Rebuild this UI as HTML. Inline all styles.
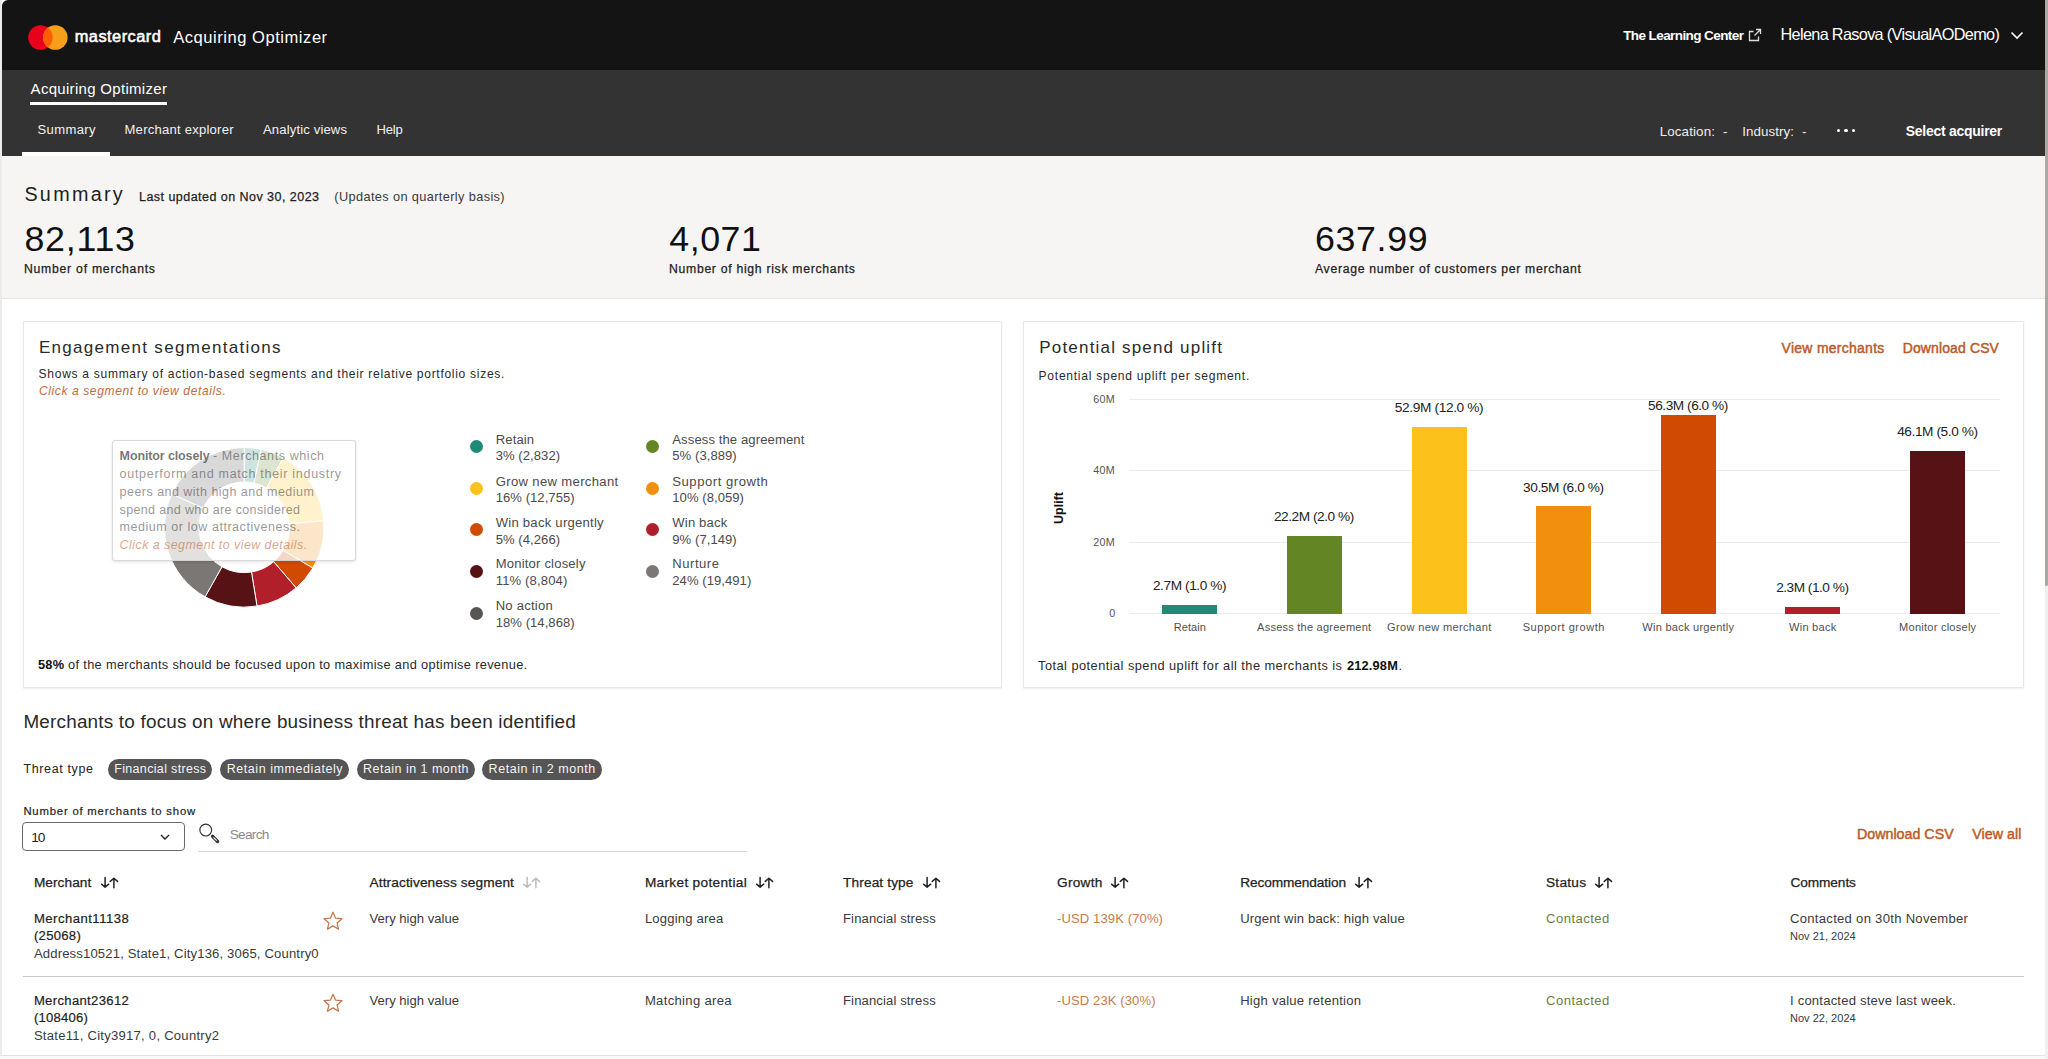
<!DOCTYPE html>
<html><head><meta charset="utf-8"><style>
html,body{margin:0;padding:0;width:2048px;height:1059px;overflow:hidden;background:#fff}
body{position:relative;font-family:"Liberation Sans",sans-serif}
.t{position:absolute;white-space:nowrap;font-family:"Liberation Sans",sans-serif}
</style></head><body>
<div style="position:absolute;left:0;top:0;width:2048px;height:1059px;background:#fff"></div>
<div style="position:absolute;left:2px;top:0;width:2043px;height:70px;background:#141414;border-top-left-radius:6px"></div>
<div style="position:absolute;left:2px;top:70px;width:2043px;height:86px;background:#333333"></div>
<svg style="position:absolute;left:0;top:0" width="200" height="70"><circle cx="40.5" cy="37.5" r="12.3" fill="#eb001b"/><circle cx="55.3" cy="37.5" r="12.3" fill="#f79e1b"/><path d="M47.9 27.7 A12.3 12.3 0 0 1 47.9 47.3 A12.3 12.3 0 0 1 47.9 27.7Z" fill="#ff5f00"/></svg>
<div class="t" style="left:74.70px;top:28.00px;font-size:16.42px;line-height:16.42px;letter-spacing:0.464px;color:#ffffff;-webkit-text-stroke:0.55px #fff;">mastercard</div>
<div class="t" style="left:173.20px;top:30.00px;font-size:16.57px;line-height:16.57px;letter-spacing:0.524px;color:#ffffff;">Acquiring Optimizer</div>
<div class="t" style="left:1623.20px;top:29.00px;font-size:13.52px;line-height:13.52px;letter-spacing:-0.592px;color:#ffffff;font-weight:bold;">The Learning Center</div>
<svg style="position:absolute;left:1747px;top:27px" width="16" height="16" viewBox="0 0 16 16"><path d="M9 2.5h4.5V7M13.5 2.5L7.5 8.5M11.5 9.5v4h-9v-9h4" fill="none" stroke="#ddd" stroke-width="1.3"/></svg>
<div class="t" style="left:1780.50px;top:26.00px;font-size:16.28px;line-height:16.28px;letter-spacing:-0.673px;color:#ffffff;">Helena Rasova (VisualAODemo)</div>
<svg style="position:absolute;left:2009px;top:29px" width="16" height="12" viewBox="0 0 16 12"><path d="M2.5 3.5L8 9L13.5 3.5" fill="none" stroke="#fff" stroke-width="1.6"/></svg>
<div class="t" style="left:30.60px;top:82.00px;font-size:14.97px;line-height:14.97px;letter-spacing:0.315px;color:#ffffff;">Acquiring Optimizer</div>
<div style="position:absolute;left:29.6px;top:102px;width:137.4px;height:3px;background:#fff"></div>
<div class="t" style="left:37.50px;top:123.00px;font-size:13.08px;line-height:13.08px;letter-spacing:0.352px;color:#f2f2f2;">Summary</div>
<div class="t" style="left:124.50px;top:123.00px;font-size:13.08px;line-height:13.08px;letter-spacing:0.229px;color:#f2f2f2;">Merchant explorer</div>
<div class="t" style="left:263.00px;top:123.00px;font-size:13.08px;line-height:13.08px;letter-spacing:0.142px;color:#f2f2f2;">Analytic views</div>
<div class="t" style="left:376.50px;top:123.00px;font-size:13.08px;line-height:13.08px;letter-spacing:-0.194px;color:#f2f2f2;">Help</div>
<div style="position:absolute;left:22.3px;top:152px;width:88px;height:4px;background:#fff"></div>
<div class="t" style="left:1659.70px;top:125.00px;font-size:13.37px;line-height:13.37px;letter-spacing:0.126px;color:#eeeeee;">Location:</div>
<div class="t" style="left:1723.00px;top:125.00px;font-size:13.37px;line-height:13.37px;letter-spacing:0.000px;color:#eeeeee;">-</div>
<div class="t" style="left:1742.30px;top:125.00px;font-size:13.37px;line-height:13.37px;letter-spacing:0.052px;color:#eeeeee;">Industry:</div>
<div class="t" style="left:1802.00px;top:125.00px;font-size:13.37px;line-height:13.37px;letter-spacing:0.000px;color:#eeeeee;">-</div>
<div style="position:absolute;left:1837.0px;top:129px;width:3.2px;height:3.2px;border-radius:50%;background:#fff"></div>
<div style="position:absolute;left:1844.4px;top:129px;width:3.2px;height:3.2px;border-radius:50%;background:#fff"></div>
<div style="position:absolute;left:1851.8000000000002px;top:129px;width:3.2px;height:3.2px;border-radius:50%;background:#fff"></div>
<div class="t" style="left:1905.80px;top:125.00px;font-size:13.95px;line-height:13.95px;letter-spacing:-0.246px;color:#ffffff;font-weight:bold;">Select acquirer</div>
<div style="position:absolute;left:1px;top:156px;width:2044px;height:142px;background:#f6f5f3;border-bottom:1px solid #e6e6e6"></div>
<div class="t" style="left:24.40px;top:185.00px;font-size:19.77px;line-height:19.77px;letter-spacing:2.299px;color:#1e1e1e;">Summary</div>
<div class="t" style="left:139.00px;top:191.00px;font-size:12.50px;line-height:12.50px;letter-spacing:0.463px;color:#1e1e1e;-webkit-text-stroke:0.25px #1e1e1e;">Last updated on Nov 30, 2023</div>
<div class="t" style="left:334.30px;top:191.00px;font-size:12.79px;line-height:12.79px;letter-spacing:0.361px;color:#3a3a3a;">(Updates on quarterly basis)</div>
<div class="t" style="left:24.40px;top:222.00px;font-size:35.76px;line-height:35.76px;letter-spacing:0.773px;color:#111;">82,113</div>
<div class="t" style="left:669.30px;top:222.00px;font-size:35.76px;line-height:35.76px;letter-spacing:0.533px;color:#111;">4,071</div>
<div class="t" style="left:1315.00px;top:222.00px;font-size:35.76px;line-height:35.76px;letter-spacing:0.637px;color:#111;">637.99</div>
<div class="t" style="left:24.00px;top:263.00px;font-size:12.21px;line-height:12.21px;letter-spacing:0.756px;color:#222;-webkit-text-stroke:0.25px #222;">Number of merchants</div>
<div class="t" style="left:669.00px;top:263.00px;font-size:12.21px;line-height:12.21px;letter-spacing:0.706px;color:#222;-webkit-text-stroke:0.25px #222;">Number of high risk merchants</div>
<div class="t" style="left:1315.00px;top:263.00px;font-size:12.21px;line-height:12.21px;letter-spacing:0.702px;color:#222;-webkit-text-stroke:0.25px #222;">Average number of customers per merchant</div>
<div style="position:absolute;left:0;top:0;width:2px;height:1059px;background:#ebebeb"></div>
<div style="position:absolute;left:23px;top:321px;width:977px;height:365px;background:#fff;border:1px solid #e8e8e8;border-radius:1px;box-shadow:0 1px 2px rgba(0,0,0,0.07)"></div>
<div style="position:absolute;left:1023px;top:321px;width:999px;height:365px;background:#fff;border:1px solid #e8e8e8;border-radius:1px;box-shadow:0 1px 2px rgba(0,0,0,0.07)"></div>
<div class="t" style="left:38.90px;top:339.00px;font-size:17.01px;line-height:17.01px;letter-spacing:1.304px;color:#2a2a2a;">Engagement segmentations</div>
<div class="t" style="left:38.60px;top:368.00px;font-size:12.06px;line-height:12.06px;letter-spacing:0.702px;color:#2a2a2a;">Shows a summary of action-based segments and their relative portfolio sizes.</div>
<div class="t" style="left:38.90px;top:385.00px;font-size:12.06px;line-height:12.06px;letter-spacing:0.607px;color:#c46a3c;font-style:italic;">Click a segment to view details.</div>
<svg style="position:absolute;left:0;top:0" width="1000" height="700"><path d="M244.20 447.50 A79.8 79.8 0 0 1 261.36 449.37 L253.94 483.06 A45.3 45.3 0 0 0 244.20 482.00Z" fill="#1f8a78" stroke="#fff" stroke-width="1"/><path d="M261.36 449.37 A79.8 79.8 0 0 1 283.45 457.82 L266.48 487.86 A45.3 45.3 0 0 0 253.94 483.06Z" fill="#648524" stroke="#fff" stroke-width="1"/><path d="M283.45 457.82 A79.8 79.8 0 0 1 323.74 520.88 L289.35 523.66 A45.3 45.3 0 0 0 266.48 487.86Z" fill="#fcc21b" stroke="#fff" stroke-width="1"/><path d="M323.74 520.88 A79.8 79.8 0 0 1 312.80 568.06 L283.14 550.44 A45.3 45.3 0 0 0 289.35 523.66Z" fill="#f28f0f" stroke="#fff" stroke-width="1"/><path d="M312.80 568.06 A79.8 79.8 0 0 1 296.11 587.91 L273.67 561.71 A45.3 45.3 0 0 0 283.14 550.44Z" fill="#d04a02" stroke="#fff" stroke-width="1"/><path d="M296.11 587.91 A79.8 79.8 0 0 1 257.01 606.07 L251.47 572.01 A45.3 45.3 0 0 0 273.67 561.71Z" fill="#b01f2a" stroke="#fff" stroke-width="1"/><path d="M257.01 606.07 A79.8 79.8 0 0 1 205.07 596.85 L221.99 566.78 A45.3 45.3 0 0 0 251.47 572.01Z" fill="#561215" stroke="#fff" stroke-width="1"/><path d="M205.07 596.85 A79.8 79.8 0 0 1 171.77 493.81 L203.08 508.29 A45.3 45.3 0 0 0 221.99 566.78Z" fill="#7a7774" stroke="#fff" stroke-width="1"/><path d="M171.77 493.81 A79.8 79.8 0 0 1 244.20 447.50 L244.20 482.00 A45.3 45.3 0 0 0 203.08 508.29Z" fill="#575553" stroke="#fff" stroke-width="1"/></svg>
<div style="position:absolute;left:112px;top:439.5px;width:242px;height:119px;background:rgba(255,255,255,0.78);border:1px solid rgba(205,205,205,0.75);border-radius:3px;box-shadow:0 1px 3px rgba(0,0,0,0.12)"></div>
<div class="t" style="left:119.60px;top:450.00px;font-size:12.50px;line-height:12.50px;letter-spacing:-0.121px;color:rgba(45,45,45,0.66);font-weight:bold;">Monitor closely</div>
<div class="t" style="left:213.00px;top:450.00px;font-size:12.50px;line-height:12.50px;letter-spacing:0.598px;color:rgba(45,45,45,0.5);">- Merchants which</div>
<div class="t" style="left:119.60px;top:468.00px;font-size:12.50px;line-height:12.50px;letter-spacing:0.711px;color:rgba(45,45,45,0.5);">outperform and match their industry</div>
<div class="t" style="left:119.60px;top:486.00px;font-size:12.50px;line-height:12.50px;letter-spacing:0.469px;color:rgba(45,45,45,0.5);">peers and with high and medium</div>
<div class="t" style="left:119.60px;top:504.00px;font-size:12.50px;line-height:12.50px;letter-spacing:0.350px;color:rgba(45,45,45,0.5);">spend and who are considered</div>
<div class="t" style="left:119.60px;top:521.00px;font-size:12.50px;line-height:12.50px;letter-spacing:0.539px;color:rgba(45,45,45,0.5);">medium or low attractiveness.</div>
<div class="t" style="left:119.60px;top:539.00px;font-size:12.50px;line-height:12.50px;letter-spacing:0.427px;color:rgba(200,105,55,0.6);font-style:italic;">Click a segment to view details.</div>
<div style="position:absolute;left:469.5px;top:440.1px;width:13px;height:13px;border-radius:50%;background:#1f8a78"></div>
<div class="t" style="left:495.70px;top:433.00px;font-size:13.08px;line-height:13.08px;letter-spacing:0.119px;color:#4a4a4a;">Retain</div>
<div class="t" style="left:495.70px;top:449.00px;font-size:13.08px;line-height:13.08px;letter-spacing:0.048px;color:#4a4a4a;">3% (2,832)</div>
<div style="position:absolute;left:646.1px;top:440.1px;width:13px;height:13px;border-radius:50%;background:#648524"></div>
<div class="t" style="left:672.30px;top:433.00px;font-size:13.08px;line-height:13.08px;letter-spacing:0.097px;color:#4a4a4a;">Assess the agreement</div>
<div class="t" style="left:672.30px;top:449.00px;font-size:13.08px;line-height:13.08px;letter-spacing:0.048px;color:#4a4a4a;">5% (3,889)</div>
<div style="position:absolute;left:469.5px;top:482.1px;width:13px;height:13px;border-radius:50%;background:#fcc21b"></div>
<div class="t" style="left:495.70px;top:475.00px;font-size:13.08px;line-height:13.08px;letter-spacing:0.345px;color:#4a4a4a;">Grow new merchant</div>
<div class="t" style="left:495.70px;top:491.00px;font-size:13.08px;line-height:13.08px;letter-spacing:0.040px;color:#4a4a4a;">16% (12,755)</div>
<div style="position:absolute;left:646.1px;top:482.1px;width:13px;height:13px;border-radius:50%;background:#f28f0f"></div>
<div class="t" style="left:672.30px;top:475.00px;font-size:13.08px;line-height:13.08px;letter-spacing:0.531px;color:#4a4a4a;">Support growth</div>
<div class="t" style="left:672.30px;top:491.00px;font-size:13.08px;line-height:13.08px;letter-spacing:0.041px;color:#4a4a4a;">10% (8,059)</div>
<div style="position:absolute;left:469.5px;top:523.2px;width:13px;height:13px;border-radius:50%;background:#d04a02"></div>
<div class="t" style="left:495.70px;top:516.00px;font-size:13.08px;line-height:13.08px;letter-spacing:0.250px;color:#4a4a4a;">Win back urgently</div>
<div class="t" style="left:495.70px;top:533.00px;font-size:13.08px;line-height:13.08px;letter-spacing:0.048px;color:#4a4a4a;">5% (4,266)</div>
<div style="position:absolute;left:646.1px;top:523.2px;width:13px;height:13px;border-radius:50%;background:#b01f2a"></div>
<div class="t" style="left:672.30px;top:516.00px;font-size:13.08px;line-height:13.08px;letter-spacing:0.167px;color:#4a4a4a;">Win back</div>
<div class="t" style="left:672.30px;top:533.00px;font-size:13.08px;line-height:13.08px;letter-spacing:0.048px;color:#4a4a4a;">9% (7,149)</div>
<div style="position:absolute;left:469.5px;top:564.5px;width:13px;height:13px;border-radius:50%;background:#561215"></div>
<div class="t" style="left:495.70px;top:557.00px;font-size:13.08px;line-height:13.08px;letter-spacing:0.182px;color:#4a4a4a;">Monitor closely</div>
<div class="t" style="left:495.70px;top:574.00px;font-size:13.08px;line-height:13.08px;letter-spacing:0.139px;color:#4a4a4a;">11% (8,804)</div>
<div style="position:absolute;left:646.1px;top:564.5px;width:13px;height:13px;border-radius:50%;background:#7a7774"></div>
<div class="t" style="left:672.30px;top:557.00px;font-size:13.08px;line-height:13.08px;letter-spacing:0.512px;color:#4a4a4a;">Nurture</div>
<div class="t" style="left:672.30px;top:574.00px;font-size:13.08px;line-height:13.08px;letter-spacing:0.040px;color:#4a4a4a;">24% (19,491)</div>
<div style="position:absolute;left:469.5px;top:606.7px;width:13px;height:13px;border-radius:50%;background:#575553"></div>
<div class="t" style="left:495.70px;top:599.00px;font-size:13.08px;line-height:13.08px;letter-spacing:0.229px;color:#4a4a4a;">No action</div>
<div class="t" style="left:495.70px;top:616.00px;font-size:13.08px;line-height:13.08px;letter-spacing:0.040px;color:#4a4a4a;">18% (14,868)</div>
<div class="t" style="left:38.10px;top:659.00px;font-size:12.79px;line-height:12.79px;letter-spacing:0.159px;color:#111;font-weight:bold;">58%</div>
<div class="t" style="left:68.10px;top:659.00px;font-size:12.79px;line-height:12.79px;letter-spacing:0.327px;color:#2a2a2a;">of the merchants should be focused upon to maximise and optimise revenue.</div>
<div class="t" style="left:1039.30px;top:339.00px;font-size:17.01px;line-height:17.01px;letter-spacing:1.181px;color:#2a2a2a;">Potential spend uplift</div>
<div class="t" style="left:1038.60px;top:370.00px;font-size:12.06px;line-height:12.06px;letter-spacing:0.739px;color:#2a2a2a;">Potential spend uplift per segment.</div>
<div class="t" style="left:1781.60px;top:342.00px;font-size:13.95px;line-height:13.95px;letter-spacing:0.292px;color:#bb5a26;-webkit-text-stroke:0.45px #bb5a26;">View merchants</div>
<div class="t" style="left:1902.70px;top:342.00px;font-size:13.95px;line-height:13.95px;letter-spacing:0.154px;color:#bb5a26;-webkit-text-stroke:0.45px #bb5a26;">Download CSV</div>
<div style="position:absolute;left:1128.5px;top:613.1px;width:871.5px;height:1px;background:#ebebeb"></div>
<div class="t" style="left:1109.20px;top:608.00px;font-size:10.76px;line-height:10.76px;letter-spacing:0.000px;color:#555;">0</div>
<div style="position:absolute;left:1128.5px;top:541.7px;width:871.5px;height:1px;background:#ebebeb"></div>
<div class="t" style="left:1093.20px;top:537.00px;font-size:10.76px;line-height:10.76px;letter-spacing:0.290px;color:#555;">20M</div>
<div style="position:absolute;left:1128.5px;top:470.2px;width:871.5px;height:1px;background:#ebebeb"></div>
<div class="t" style="left:1093.20px;top:465.00px;font-size:10.76px;line-height:10.76px;letter-spacing:0.290px;color:#555;">40M</div>
<div style="position:absolute;left:1128.5px;top:398.8px;width:871.5px;height:1px;background:#ebebeb"></div>
<div class="t" style="left:1093.20px;top:394.00px;font-size:10.76px;line-height:10.76px;letter-spacing:0.290px;color:#555;">60M</div>
<div class="t" style="left:1050px;top:498px;font-size:12.5px;line-height:14px;font-weight:bold;color:#111;transform:rotate(-90deg);transform-origin:0 0;top:524px;left:1052px">Uplift</div>
<div style="position:absolute;left:1162.2px;top:605.0px;width:55.2px;height:8.6px;background:#1f8a78"></div>
<div class="t" style="left:1173.75px;top:622.00px;font-size:11.05px;line-height:11.05px;letter-spacing:0.035px;color:#505050;">Retain</div>
<div class="t" style="left:1152.90px;top:579.00px;font-size:13.66px;line-height:13.66px;letter-spacing:-0.402px;color:#222;">2.7M (1.0 %)</div>
<div style="position:absolute;left:1286.5px;top:536.0px;width:55.2px;height:77.6px;background:#648524"></div>
<div class="t" style="left:1257.10px;top:622.00px;font-size:11.05px;line-height:11.05px;letter-spacing:0.215px;color:#505050;">Assess the agreement</div>
<div class="t" style="left:1273.95px;top:510.00px;font-size:13.66px;line-height:13.66px;letter-spacing:-0.459px;color:#222;">22.2M (2.0 %)</div>
<div style="position:absolute;left:1411.6px;top:426.6px;width:55.2px;height:187.0px;background:#fcc21b"></div>
<div class="t" style="left:1387.05px;top:622.00px;font-size:11.05px;line-height:11.05px;letter-spacing:0.340px;color:#505050;">Grow new merchant</div>
<div class="t" style="left:1394.75px;top:401.00px;font-size:13.66px;line-height:13.66px;letter-spacing:-0.345px;color:#222;">52.9M (12.0 %)</div>
<div style="position:absolute;left:1536.0px;top:506.2px;width:55.2px;height:107.4px;background:#f28f0f"></div>
<div class="t" style="left:1522.70px;top:622.00px;font-size:11.05px;line-height:11.05px;letter-spacing:0.531px;color:#505050;">Support growth</div>
<div class="t" style="left:1523.05px;top:481.00px;font-size:13.66px;line-height:13.66px;letter-spacing:-0.392px;color:#222;">30.5M (6.0 %)</div>
<div style="position:absolute;left:1660.6px;top:414.7px;width:55.2px;height:198.9px;background:#d04a02"></div>
<div class="t" style="left:1642.30px;top:622.00px;font-size:11.05px;line-height:11.05px;letter-spacing:0.249px;color:#505050;">Win back urgently</div>
<div class="t" style="left:1648.05px;top:399.00px;font-size:13.66px;line-height:13.66px;letter-spacing:-0.459px;color:#222;">56.3M (6.0 %)</div>
<div style="position:absolute;left:1785.0px;top:606.7px;width:55.2px;height:6.9px;background:#b01f2a"></div>
<div class="t" style="left:1789.00px;top:622.00px;font-size:11.05px;line-height:11.05px;letter-spacing:0.249px;color:#505050;">Win back</div>
<div class="t" style="left:1776.15px;top:581.00px;font-size:13.66px;line-height:13.66px;letter-spacing:-0.484px;color:#222;">2.3M (1.0 %)</div>
<div style="position:absolute;left:1910.0px;top:450.7px;width:55.2px;height:162.9px;background:#561215"></div>
<div class="t" style="left:1899.05px;top:622.00px;font-size:11.05px;line-height:11.05px;letter-spacing:0.244px;color:#505050;">Monitor closely</div>
<div class="t" style="left:1897.15px;top:425.00px;font-size:13.66px;line-height:13.66px;letter-spacing:-0.409px;color:#222;">46.1M (5.0 %)</div>
<div class="t" style="left:1038.10px;top:660.00px;font-size:12.79px;line-height:12.79px;letter-spacing:0.461px;color:#2a2a2a;">Total potential spend uplift for all the merchants is</div>
<div class="t" style="left:1346.90px;top:660.00px;font-size:12.79px;line-height:12.79px;letter-spacing:0.191px;color:#111;font-weight:bold;">212.98M</div>
<div class="t" style="left:1398.60px;top:660.00px;font-size:12.79px;line-height:12.79px;letter-spacing:0.000px;color:#2a2a2a;">.</div>
<div class="t" style="left:23.40px;top:713.00px;font-size:18.90px;line-height:18.90px;letter-spacing:0.204px;color:#2a2a2a;">Merchants to focus on where business threat has been identified</div>
<div class="t" style="left:23.40px;top:763.00px;font-size:12.50px;line-height:12.50px;letter-spacing:0.635px;color:#222;">Threat type</div>
<div style="position:absolute;left:107.8px;top:758.7px;width:104.7px;height:21px;border-radius:11px;background:#555555"></div>
<div class="t" style="left:114.20px;top:763.00px;font-size:12.50px;line-height:12.50px;letter-spacing:0.339px;color:#f4f4f4;">Financial stress</div>
<div style="position:absolute;left:220.3px;top:758.7px;width:128.7px;height:21px;border-radius:11px;background:#555555"></div>
<div class="t" style="left:226.70px;top:763.00px;font-size:12.50px;line-height:12.50px;letter-spacing:0.564px;color:#f4f4f4;">Retain immediately</div>
<div style="position:absolute;left:356.6px;top:758.7px;width:118.4px;height:21px;border-radius:11px;background:#555555"></div>
<div class="t" style="left:363.00px;top:763.00px;font-size:12.50px;line-height:12.50px;letter-spacing:0.475px;color:#f4f4f4;">Retain in 1 month</div>
<div style="position:absolute;left:482.2px;top:758.7px;width:119.4px;height:21px;border-radius:11px;background:#555555"></div>
<div class="t" style="left:488.60px;top:763.00px;font-size:12.50px;line-height:12.50px;letter-spacing:0.537px;color:#f4f4f4;">Retain in 2 month</div>
<div class="t" style="left:23.40px;top:806.00px;font-size:11.34px;line-height:11.34px;letter-spacing:0.795px;color:#222;-webkit-text-stroke:0.2px #222;">Number of merchants to show</div>
<div style="position:absolute;box-sizing:border-box;left:22.3px;top:822px;width:162.5px;height:29.4px;border:1.6px solid #6a6a6a;border-radius:4px;background:#fff"></div>
<div class="t" style="left:31.30px;top:831.00px;font-size:13.66px;line-height:13.66px;letter-spacing:-1.166px;color:#222;">10</div>
<svg style="position:absolute;left:158px;top:830px" width="14" height="14" viewBox="0 0 14 14"><path d="M3 5L7 9L11 5" fill="none" stroke="#222" stroke-width="1.4"/></svg>
<svg style="position:absolute;left:196px;top:821px" width="26" height="26" viewBox="0 0 26 26"><circle cx="9.75" cy="9.05" r="5.9" fill="none" stroke="#333" stroke-width="1.15"/><path d="M16.6 15.3L21.6 20.5" stroke="#333" stroke-width="3.3" stroke-linecap="round"/><path d="M17.5 16.3L20.8 19.7" stroke="#fff" stroke-width="1.1"/></svg>
<div class="t" style="left:229.70px;top:828.00px;font-size:13.66px;line-height:13.66px;letter-spacing:-0.722px;color:#8a8a8a;">Search</div>
<div style="position:absolute;left:198.4px;top:850.5px;width:549px;height:1px;background:#d6d6d6"></div>
<div class="t" style="left:1857.00px;top:827.00px;font-size:14.24px;line-height:14.24px;letter-spacing:0.011px;color:#bb5a26;-webkit-text-stroke:0.45px #bb5a26;">Download CSV</div>
<div class="t" style="left:1972.30px;top:827.00px;font-size:14.24px;line-height:14.24px;letter-spacing:0.049px;color:#bb5a26;-webkit-text-stroke:0.45px #bb5a26;">View all</div>
<div class="t" style="left:33.90px;top:876.00px;font-size:13.66px;line-height:13.66px;letter-spacing:0.061px;color:#222;-webkit-text-stroke:0.25px #222;">Merchant</div>
<svg style="position:absolute;left:101.3px;top:876px" width="20" height="14" viewBox="0 0 20 14"><path d="M4.1 1.5V11M0.5 8.2L4.1 11.2L7.7 8.2" fill="none" stroke="#222" stroke-width="1.5" stroke-linecap="round" stroke-linejoin="round"/><path d="M12.9 11.7V2.4M9.3 5.4L12.9 2.3L16.5 5.4" fill="none" stroke="#222" stroke-width="1.5" stroke-linecap="round" stroke-linejoin="round"/></svg>
<div class="t" style="left:369.50px;top:876.00px;font-size:13.66px;line-height:13.66px;letter-spacing:0.118px;color:#222;-webkit-text-stroke:0.25px #222;">Attractiveness segment</div>
<svg style="position:absolute;left:523.0px;top:876px" width="20" height="14" viewBox="0 0 20 14"><path d="M4.1 1.5V11M0.5 8.2L4.1 11.2L7.7 8.2" fill="none" stroke="#bbb" stroke-width="1.5" stroke-linecap="round" stroke-linejoin="round"/><path d="M12.9 11.7V2.4M9.3 5.4L12.9 2.3L16.5 5.4" fill="none" stroke="#bbb" stroke-width="1.5" stroke-linecap="round" stroke-linejoin="round"/></svg>
<div class="t" style="left:644.90px;top:876.00px;font-size:13.66px;line-height:13.66px;letter-spacing:0.313px;color:#222;-webkit-text-stroke:0.25px #222;">Market potential</div>
<svg style="position:absolute;left:756.0px;top:876px" width="20" height="14" viewBox="0 0 20 14"><path d="M4.1 1.5V11M0.5 8.2L4.1 11.2L7.7 8.2" fill="none" stroke="#222" stroke-width="1.5" stroke-linecap="round" stroke-linejoin="round"/><path d="M12.9 11.7V2.4M9.3 5.4L12.9 2.3L16.5 5.4" fill="none" stroke="#222" stroke-width="1.5" stroke-linecap="round" stroke-linejoin="round"/></svg>
<div class="t" style="left:843.00px;top:876.00px;font-size:13.66px;line-height:13.66px;letter-spacing:0.137px;color:#222;-webkit-text-stroke:0.25px #222;">Threat type</div>
<svg style="position:absolute;left:922.8px;top:876px" width="20" height="14" viewBox="0 0 20 14"><path d="M4.1 1.5V11M0.5 8.2L4.1 11.2L7.7 8.2" fill="none" stroke="#222" stroke-width="1.5" stroke-linecap="round" stroke-linejoin="round"/><path d="M12.9 11.7V2.4M9.3 5.4L12.9 2.3L16.5 5.4" fill="none" stroke="#222" stroke-width="1.5" stroke-linecap="round" stroke-linejoin="round"/></svg>
<div class="t" style="left:1057.00px;top:876.00px;font-size:13.66px;line-height:13.66px;letter-spacing:0.267px;color:#222;-webkit-text-stroke:0.25px #222;">Growth</div>
<svg style="position:absolute;left:1111.4px;top:876px" width="20" height="14" viewBox="0 0 20 14"><path d="M4.1 1.5V11M0.5 8.2L4.1 11.2L7.7 8.2" fill="none" stroke="#222" stroke-width="1.5" stroke-linecap="round" stroke-linejoin="round"/><path d="M12.9 11.7V2.4M9.3 5.4L12.9 2.3L16.5 5.4" fill="none" stroke="#222" stroke-width="1.5" stroke-linecap="round" stroke-linejoin="round"/></svg>
<div class="t" style="left:1240.20px;top:876.00px;font-size:13.66px;line-height:13.66px;letter-spacing:-0.086px;color:#222;-webkit-text-stroke:0.25px #222;">Recommendation</div>
<svg style="position:absolute;left:1354.7px;top:876px" width="20" height="14" viewBox="0 0 20 14"><path d="M4.1 1.5V11M0.5 8.2L4.1 11.2L7.7 8.2" fill="none" stroke="#222" stroke-width="1.5" stroke-linecap="round" stroke-linejoin="round"/><path d="M12.9 11.7V2.4M9.3 5.4L12.9 2.3L16.5 5.4" fill="none" stroke="#222" stroke-width="1.5" stroke-linecap="round" stroke-linejoin="round"/></svg>
<div class="t" style="left:1546.00px;top:876.00px;font-size:13.66px;line-height:13.66px;letter-spacing:0.253px;color:#222;-webkit-text-stroke:0.25px #222;">Status</div>
<svg style="position:absolute;left:1595.0px;top:876px" width="20" height="14" viewBox="0 0 20 14"><path d="M4.1 1.5V11M0.5 8.2L4.1 11.2L7.7 8.2" fill="none" stroke="#222" stroke-width="1.5" stroke-linecap="round" stroke-linejoin="round"/><path d="M12.9 11.7V2.4M9.3 5.4L12.9 2.3L16.5 5.4" fill="none" stroke="#222" stroke-width="1.5" stroke-linecap="round" stroke-linejoin="round"/></svg>
<div class="t" style="left:1790.40px;top:876.00px;font-size:13.66px;line-height:13.66px;letter-spacing:-0.066px;color:#222;-webkit-text-stroke:0.25px #222;">Comments</div>
<div class="t" style="left:33.90px;top:912.00px;font-size:13.08px;line-height:13.08px;letter-spacing:0.495px;color:#222;-webkit-text-stroke:0.2px #222;">Merchant11138</div>
<div class="t" style="left:33.90px;top:929.00px;font-size:13.08px;line-height:13.08px;letter-spacing:0.306px;color:#222;-webkit-text-stroke:0.2px #222;">(25068)</div>
<div class="t" style="left:33.90px;top:947.00px;font-size:13.08px;line-height:13.08px;letter-spacing:0.159px;color:#3a3a3a;">Address10521, State1, City136, 3065, Country0</div>
<svg style="position:absolute;left:319.5px;top:909px" width="26" height="24" viewBox="0 0 26 24"><path d="M13.00 3.20 L15.53 9.12 L21.94 9.70 L17.09 13.93 L18.53 20.20 L13.00 16.90 L7.47 20.20 L8.91 13.93 L4.06 9.70 L10.47 9.12Z" fill="none" stroke="#c4764a" stroke-width="1.25" stroke-linejoin="round"/></svg>
<div class="t" style="left:369.50px;top:912.00px;font-size:13.08px;line-height:13.08px;letter-spacing:0.002px;color:#3a3a3a;">Very high value</div>
<div class="t" style="left:644.90px;top:912.00px;font-size:13.08px;line-height:13.08px;letter-spacing:0.182px;color:#3a3a3a;">Logging area</div>
<div class="t" style="left:843.00px;top:912.00px;font-size:13.08px;line-height:13.08px;letter-spacing:0.123px;color:#3a3a3a;">Financial stress</div>
<div class="t" style="left:1057.00px;top:912.00px;font-size:13.08px;line-height:13.08px;letter-spacing:0.092px;color:#c77a4c;">-USD 139K (70%)</div>
<div class="t" style="left:1240.20px;top:912.00px;font-size:13.08px;line-height:13.08px;letter-spacing:0.150px;color:#3a3a3a;">Urgent win back: high value</div>
<div class="t" style="left:1546.00px;top:912.00px;font-size:13.08px;line-height:13.08px;letter-spacing:0.468px;color:#6b7f3a;">Contacted</div>
<div class="t" style="left:1790.00px;top:912.00px;font-size:13.08px;line-height:13.08px;letter-spacing:0.284px;color:#3a3a3a;">Contacted on 30th November</div>
<div class="t" style="left:1790.00px;top:931.00px;font-size:11.05px;line-height:11.05px;letter-spacing:-0.003px;color:#3a3a3a;">Nov 21, 2024</div>
<div class="t" style="left:33.90px;top:994.00px;font-size:13.08px;line-height:13.08px;letter-spacing:0.332px;color:#222;-webkit-text-stroke:0.2px #222;">Merchant23612</div>
<div class="t" style="left:33.90px;top:1011.00px;font-size:13.08px;line-height:13.08px;letter-spacing:0.230px;color:#222;-webkit-text-stroke:0.2px #222;">(108406)</div>
<div class="t" style="left:33.90px;top:1029.00px;font-size:13.08px;line-height:13.08px;letter-spacing:0.248px;color:#3a3a3a;">State11, City3917, 0, Country2</div>
<svg style="position:absolute;left:319.5px;top:991px" width="26" height="24" viewBox="0 0 26 24"><path d="M13.00 3.20 L15.53 9.12 L21.94 9.70 L17.09 13.93 L18.53 20.20 L13.00 16.90 L7.47 20.20 L8.91 13.93 L4.06 9.70 L10.47 9.12Z" fill="none" stroke="#c4764a" stroke-width="1.25" stroke-linejoin="round"/></svg>
<div class="t" style="left:369.50px;top:994.00px;font-size:13.08px;line-height:13.08px;letter-spacing:0.002px;color:#3a3a3a;">Very high value</div>
<div class="t" style="left:644.90px;top:994.00px;font-size:13.08px;line-height:13.08px;letter-spacing:0.314px;color:#3a3a3a;">Matching area</div>
<div class="t" style="left:843.00px;top:994.00px;font-size:13.08px;line-height:13.08px;letter-spacing:0.123px;color:#3a3a3a;">Financial stress</div>
<div class="t" style="left:1057.00px;top:994.00px;font-size:13.08px;line-height:13.08px;letter-spacing:0.085px;color:#c77a4c;">-USD 23K (30%)</div>
<div class="t" style="left:1240.20px;top:994.00px;font-size:13.08px;line-height:13.08px;letter-spacing:0.234px;color:#3a3a3a;">High value retention</div>
<div class="t" style="left:1546.00px;top:994.00px;font-size:13.08px;line-height:13.08px;letter-spacing:0.468px;color:#6b7f3a;">Contacted</div>
<div class="t" style="left:1790.00px;top:994.00px;font-size:13.08px;line-height:13.08px;letter-spacing:0.196px;color:#3a3a3a;">I contacted steve last week.</div>
<div class="t" style="left:1790.00px;top:1013.00px;font-size:11.05px;line-height:11.05px;letter-spacing:-0.003px;color:#3a3a3a;">Nov 22, 2024</div>
<div style="position:absolute;left:22.6px;top:976px;width:2001px;height:1px;background:#c8c8c8"></div>
<div style="position:absolute;left:0;top:1055px;width:2045px;height:1px;background:#e2e2e2"></div>
<div style="position:absolute;left:0;top:1056px;width:2045px;height:3px;background:#fafafa"></div>
<div style="position:absolute;left:2045px;top:0;width:3px;height:1059px;background:#f0f0f0"></div>
<div style="position:absolute;left:2045px;top:0;width:3px;height:586px;background:#aca79f;border-radius:0 0 2px 2px"></div>
</body></html>
